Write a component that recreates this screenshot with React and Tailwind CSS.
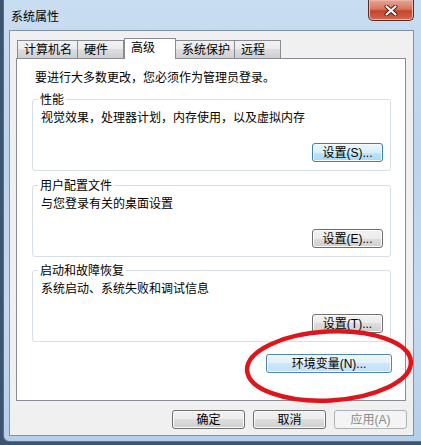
import React from "react";

const F = "font-['Liberation_Sans','Noto_Sans_CJK_SC',sans-serif]";

const normalBtn =
  "border border-[#707070] bg-[linear-gradient(#f2f2f2,#ebebeb_50%,#dddddd_50%,#cfcfcf)] shadow-[inset_0_0_0_1px_#fbfbfb] text-black";
const hotBtn =
  "border border-[#3c7fb1] bg-[linear-gradient(#eaf6fd,#d9f0fc_50%,#bee6fd_50%,#a7d9f5)] shadow-[inset_0_0_0_1px_#f4fbfe] text-black";
const focusBtn =
  "border border-[#4f86b8] bg-[linear-gradient(#eef7fd,#e1f0fb_50%,#cfe7f8_50%,#c1e0f6)] shadow-[inset_0_0_0_1px_#f6fbfe] text-black";
const disabledBtn = "border border-[#adb2b5] bg-[#f4f4f4] text-[#8a8a8a]";

function Btn({ children, cls, w }) {
  return (
    <div
      className={`${cls} ${w} h-[19px] rounded-[3px] flex items-center justify-center text-[12px] leading-[14px]`}
    >
      {children}
    </div>
  );
}

function Group({ label, text, btn, mt }) {
  return (
    <div
      className={`${mt} ml-[15px] w-[359px] h-[72px] border border-[#d5dfe5] rounded-[3px] flex flex-col`}
    >
      <div className="-mt-[7px] ml-[5px] self-start bg-white px-[2px] text-[12px] leading-[14px]">
        {label}
      </div>
      <div className="mt-[4px] ml-[8px] text-[12px] leading-[14px]">{text}</div>
      <div className="mt-auto mb-[8px] mr-[7px] self-end">{btn}</div>
    </div>
  );
}

function Tab({ children, w, selected }) {
  if (selected) {
    return (
      <div
        className={`relative z-10 ${w} h-[21px] -mb-px bg-white border border-b-0 border-[#898c95] pl-[6px] pt-[2px] text-[12px] leading-[14px]`}
      >
        {children}
      </div>
    );
  }
  return (
    <div
      className={`${w} h-[18px] border border-b-0 border-[#898c95] bg-[linear-gradient(#f2f2f2,#ebebeb_50%,#dddddd_50%,#cfcfcf)] pl-[6px] pt-[2px] text-[12px] leading-[14px]`}
    >
      {children}
    </div>
  );
}

export default function App() {
  return (
    <div
      className={`${F} relative w-[421px] h-[445px] overflow-hidden bg-[#3d5470] text-black`}
    >
      <div className="ml-[3px] w-[440px] h-[442px] rounded-bl-[6px] border-l border-b border-[#5e6f82] bg-[linear-gradient(180deg,#c9ddf1_0%,#bcd4ec_35%,#c5daef_70%,#b6cfe9_100%)] flex flex-col">
        {/* title bar */}
        <div className="w-[410px] h-[30px] flex items-start justify-between pl-[7px]">
          <div className="mt-[10px] text-[12px] leading-[14px] text-black">
            系统属性
          </div>
          <div className="w-[46px] h-[21px] rounded-b-[5px] border border-t-0 border-[#5b2a22] bg-[linear-gradient(#e7a593,#d7765f_45%,#c4432c_55%,#d26a52)] shadow-[inset_0_0_0_1px_#eab4a6] flex items-center justify-center">
            <svg width="14" height="11" viewBox="0 0 14 11">
              <path
                d="M2.5 1.5 L11.5 9.5 M11.5 1.5 L2.5 9.5"
                stroke="#4a1c14"
                strokeWidth="4"
                strokeLinecap="round"
              />
              <path
                d="M2.5 1.5 L11.5 9.5 M11.5 1.5 L2.5 9.5"
                stroke="#ffffff"
                strokeWidth="2.2"
                strokeLinecap="round"
              />
            </svg>
          </div>
        </div>

        {/* client area */}
        <div className="ml-[5px] w-[405px] h-[406px] border border-[#7f93a8] bg-[#f0f0f0] flex flex-col">
          {/* tabs */}
          <div className="mt-[7px] pl-[7px] flex items-end h-[20px]">
            <Tab w="w-[61px]">计算机名</Tab>
            <div className="-ml-px">
              <Tab w="w-[47px]">硬件</Tab>
            </div>
            <Tab w="w-[52px]" selected>
              高级
            </Tab>
            <div className="-ml-px">
              <Tab w="w-[60px]">系统保护</Tab>
            </div>
            <div className="-ml-px">
              <Tab w="w-[47px]">远程</Tab>
            </div>
          </div>

          {/* panel */}
          <div className="ml-[6px] w-[390px] h-[343px] border border-[#898c95] bg-white flex flex-col">
            <div className="mt-[12px] ml-[18px] text-[12px] leading-[14px]">
              要进行大多数更改，您必须作为管理员登录。
            </div>
            <Group
              mt="mt-[14px]"
              label="性能"
              text="视觉效果，处理器计划，内存使用，以及虚拟内存"
              btn={
                <Btn cls={hotBtn} w="w-[71px]">
                  设置(S)...
                </Btn>
              }
            />
            <Group
              mt="mt-[14px]"
              label="用户配置文件"
              text="与您登录有关的桌面设置"
              btn={
                <Btn cls={normalBtn} w="w-[71px]">
                  设置(E)...
                </Btn>
              }
            />
            <Group
              mt="mt-[13px]"
              label="启动和故障恢复"
              text="系统启动、系统失败和调试信息"
              btn={
                <Btn cls={normalBtn} w="w-[71px]">
                  设置(T)...
                </Btn>
              }
            />
            <div className="mt-[12px] self-end mr-[13px]">
              <Btn cls={focusBtn} w="w-[126px]">
                环境变量(N)...
              </Btn>
            </div>
          </div>

          {/* bottom buttons */}
          <div className="mt-[9px] self-end mr-[6px] flex gap-[8px]">
            <Btn cls={normalBtn} w="w-[73px]">
              确定
            </Btn>
            <Btn cls={normalBtn} w="w-[73px]">
              取消
            </Btn>
            <Btn cls={disabledBtn} w="w-[73px]">
              应用(A)
            </Btn>
          </div>
        </div>
      </div>

      {/* red hand-drawn ellipse annotation */}
      <svg
        className="absolute left-0 top-0 pointer-events-none"
        width="421"
        height="445"
        viewBox="0 0 421 445"
      >
        <ellipse
          cx="329"
          cy="366"
          rx="82"
          ry="34.5"
          transform="rotate(-3 329 366)"
          fill="none"
          stroke="#e0141b"
          strokeWidth="4.5"
        />
      </svg>
    </div>
  );
}
